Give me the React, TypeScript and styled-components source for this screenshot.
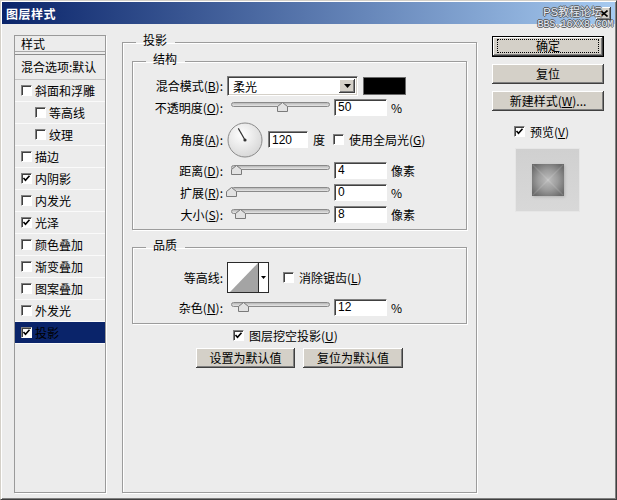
import React from "react";
import styled, { createGlobalStyle } from "styled-components";

const FONT = `"Noto Sans CJK SC", "Noto Sans", sans-serif`;

const GlobalStyle = createGlobalStyle`
  html, body { margin: 0; padding: 0; background: #ececec; }
  body { font-family: ${FONT}; font-size: 12px; color: #000; }
  * { box-sizing: border-box; }
`;

const Window = styled.div`
  position: relative;
  width: 617px;
  height: 500px;
  background: #ececec;
  border-top: 1px solid #d4d0c8;
  border-left: 1px solid #d4d0c8;
  border-right: 1px solid #404040;
  border-bottom: 1px solid #404040;
  box-shadow: inset 1px 1px 0 #fff, inset -1px -1px 0 #808080;
  padding: 1px;
  display: flex;
  flex-direction: column;
  overflow: hidden;
`;

const TitleBar = styled.div`
  height: 22px;
  flex: none;
  background: linear-gradient(to right, #0a246a, #a6caf0);
  display: flex;
  align-items: center;
  padding-left: 4px;
`;

const Title = styled.span`
  color: #fff;
  font-weight: bold;
  font-size: 12px;
  letter-spacing: 0.5px;
`;

const CloseBtn = styled.span`
  margin-left: auto;
  margin-right: 4px;
  width: 15px;
  height: 13px;
  background: #d4d0c8;
  box-shadow: inset -1px -1px 0 #404040, inset 1px 1px 0 #fff, inset -2px -2px 0 #808080;
  display: flex;
  align-items: center;
  justify-content: center;
`;

const Watermark = styled.div`
  position: absolute;
  top: 4px;
  right: 3px;
  display: flex;
  flex-direction: column;
  align-items: flex-end;
  color: #e6edf8;
  text-shadow: -1px 0 #5a5a5a, 1px 0 #5a5a5a, 0 -1px #5a5a5a, 0 1px #5a5a5a;
  pointer-events: none;
`;

const WmTop = styled.span`
  font-family: "Liberation Sans", ${FONT};
  font-size: 11px;
  line-height: 14px;
  margin-right: 11px;
`;

const WmBottom = styled.span`
  font-family: "Liberation Mono", monospace;
  font-size: 10px;
  line-height: 12px;
  letter-spacing: -0.2px;
`;

const Body = styled.div`
  flex: 1;
  display: flex;
  align-items: stretch;
  padding: 9px 0 5px 12px;
`;

/* ---------- left style list ---------- */

const StyleList = styled.div`
  width: 92px;
  margin-top: 2px;
  border: 1px solid #9a9a9a;
  box-shadow: 1px 1px 0 #fff;
  display: flex;
  flex-direction: column;
`;

const ListHeader = styled.div`
  height: 16px;
  line-height: 16px;
  padding-left: 6px;
  border-bottom: 1px solid #a8a8a8;
`;

const BlendRow = styled.div`
  margin-top: 2px;
  height: 26px;
  line-height: 24px;
  padding-left: 6px;
  border-top: 1px solid #8c8c8c;
  border-bottom: 1px solid #c4c4c4;
  white-space: nowrap;
  overflow: hidden;
`;

const ListItem = styled.div<{ $sub?: boolean; $selected?: boolean }>`
  height: 22px;
  display: flex;
  align-items: center;
  gap: 3px;
  padding-left: ${(p) => (p.$sub ? 20 : 6)}px;
  border-bottom: 1px solid #fafafa;
  background: ${(p) => (p.$selected ? "#0a246a" : "transparent")};
  color: #000;
`;

/* ---------- common controls ---------- */

const CheckBox = styled.span`
  display: inline-flex;
  align-items: center;
  justify-content: center;
  width: 11px;
  height: 11px;
  flex: none;
  background: #fff;
  border-top: 1px solid #808080;
  border-left: 1px solid #808080;
  border-right: 1px solid #fff;
  border-bottom: 1px solid #fff;
  box-shadow: inset 1px 1px 0 #404040;
`;

const Check: React.FC<{ checked?: boolean }> = ({ checked }) => (
  <CheckBox>
    {checked && (
      <svg width="9" height="9" viewBox="0 0 9 9">
        <polyline points="1.5,4 3.5,6.3 7.5,1.8" fill="none" stroke="#000" strokeWidth="1.6" />
      </svg>
    )}
  </CheckBox>
);

const NumField = styled.input<{ $w: number; $ml?: number }>`
  width: ${(p) => p.$w}px;
  height: 17px;
  margin-left: ${(p) => p.$ml ?? 0}px;
  flex: none;
  background: #fff;
  border-top: 1px solid #808080;
  border-left: 1px solid #808080;
  border-right: 1px solid #fff;
  border-bottom: 1px solid #fff;
  box-shadow: inset 1px 1px 0 #404040;
  padding: 0 0 0 3px;
  font-family: "Liberation Sans", sans-serif;
  font-size: 12px;
  color: #000;
  outline: none;
`;

const Unit = styled.span<{ $ml?: number }>`
  margin-left: ${(p) => p.$ml ?? 4}px;
  white-space: nowrap;
`;

const Button = styled.button<{ $w: number; $default?: boolean }>`
  width: ${(p) => p.$w}px;
  height: ${(p) => (p.$default ? 21 : 20)}px;
  flex: none;
  padding: 0;
  display: flex;
  align-items: stretch;
  justify-content: stretch;
  background: #d4d0c8;
  color: #000;
  font-family: ${FONT};
  font-size: 12px;
  border: ${(p) => (p.$default ? "1px solid #000" : "none")};
  box-shadow: inset -1px -1px 0 #404040, inset 1px 1px 0 #fff, inset -2px -2px 0 #808080;
  cursor: default;
`;

const BtnLabel = styled.span<{ $focus?: boolean }>`
  flex: 1;
  display: flex;
  align-items: center;
  justify-content: center;
  margin: ${(p) => (p.$focus ? "2px 4px 3px 4px" : "0")};
  border: ${(p) => (p.$focus ? "1px dotted #000" : "none")};
  line-height: 1;
`;

/* ---------- group boxes ---------- */

const GroupBox = styled.fieldset<{ $mx?: number; $mt?: number }>`
  margin: ${(p) => p.$mt ?? 0}px ${(p) => p.$mx ?? 0}px 0;
  padding: 0;
  min-width: 0;
  border: 1px solid #9c9c9c;
  box-shadow: 1px 1px 0 #fff, inset 1px 1px 0 #fff;
  display: flex;
  flex-direction: column;
`;

const Legend = styled.legend`
  margin-left: 13px;
  padding: 0 8px 4px 7px;
  line-height: 14px;
  font-size: 12px;
`;

const MainGroup = styled(GroupBox)`
  width: 355px;
  margin-left: 16px;
`;

const GroupContent = styled.div<{ $pt: number; $pb: number }>`
  display: flex;
  flex-direction: column;
  padding: ${(p) => p.$pt}px 0 ${(p) => p.$pb}px;
`;

const Row = styled.div<{ $h: number; $mt?: number }>`
  height: ${(p) => p.$h}px;
  margin-top: ${(p) => p.$mt ?? 0}px;
  display: flex;
  align-items: center;
`;

const Label = styled.span`
  width: 90px;
  flex: none;
  text-align: right;
  white-space: nowrap;
`;

const SelectBox = styled.div`
  margin-left: 4px;
  width: 131px;
  height: 20px;
  flex: none;
  display: flex;
  align-items: stretch;
  background: #fff;
  border-top: 1px solid #808080;
  border-left: 1px solid #808080;
  border-right: 1px solid #fff;
  border-bottom: 1px solid #fff;
  box-shadow: inset 1px 1px 0 #404040, inset -1px -1px 0 #d4d0c8;
  padding: 2px 2px 2px 5px;
`;

const SelectText = styled.span`
  flex: 1;
  line-height: 16px;
`;

const SelectArrow = styled.span`
  width: 16px;
  flex: none;
  background: #d4d0c8;
  box-shadow: inset -1px -1px 0 #404040, inset 1px 1px 0 #fff, inset -2px -2px 0 #808080;
  display: flex;
  align-items: center;
  justify-content: center;
`;

const Swatch = styled.div`
  margin-left: 5px;
  width: 43px;
  height: 18px;
  flex: none;
  background: #000;
  border: 1px solid #6a6a6a;
`;

const SliderBox = styled.div`
  position: relative;
  width: 108px;
  height: 10px;
  margin-left: 3px;
  flex: none;
`;

const Track = styled.div`
  margin: 0 4px 0 5px;
  height: 5px;
  border-radius: 3px;
  border: 1px solid #8a8a8a;
  background: linear-gradient(#b8b8b8, #e6e6e6);
`;

const Thumb = styled.svg`
  position: absolute;
  top: 0;
`;

const Slider: React.FC<{ pos: number }> = ({ pos }) => (
  <SliderBox>
    <Track />
    <Thumb width="11" height="10" viewBox="0 0 11 10" style={{ left: pos - 0.5 }}>
      <path d="M5.5 0.5 L10.5 4.5 L10.5 9.5 L0.5 9.5 L0.5 4.5 Z" fill="#e2e2e2" stroke="#7a7a7a" />
    </Thumb>
  </SliderBox>
);

const Dial = styled.svg`
  margin-left: 4px;
  flex: none;
`;

const ContourBox = styled.div`
  margin-left: 4px;
  width: 42px;
  height: 31px;
  flex: none;
  border: 1px solid #2a2a2a;
  background: #fff;
  display: flex;
`;

const ContourArrow = styled.span`
  width: 10px;
  border-left: 1px solid #2a2a2a;
  display: flex;
  align-items: center;
  justify-content: center;
`;

const CheckLabel = styled.label<{ $ml: number }>`
  margin-left: ${(p) => p.$ml}px;
  display: flex;
  align-items: center;
  gap: 5px;
  white-space: nowrap;
`;

const ButtonRow = styled.div`
  margin-top: 4px;
  display: flex;
  justify-content: center;
  gap: 8px;
`;

/* ---------- right column ---------- */

const SideColumn = styled.div`
  margin-left: 15px;
  margin-top: 3px;
  width: 112px;
  display: flex;
  flex-direction: column;
  align-items: flex-start;
  gap: 7px;
`;

const PreviewToggle = styled(CheckLabel)`
  margin-top: 5px;
`;

const PreviewFrame = styled.div`
  margin-left: 23px;
  margin-top: 1px;
  width: 65px;
  height: 64px;
  border: 1px solid #e6e6e6;
  background: linear-gradient(#d0d0d0, #d8d8d8);
  display: flex;
  align-items: center;
  justify-content: center;
`;

const U: React.FC<{ children: React.ReactNode }> = ({ children }) => <u>{children}</u>;

const styleItems: { label: string; sub?: boolean; checked?: boolean; selected?: boolean }[] = [
  { label: "斜面和浮雕" },
  { label: "等高线", sub: true },
  { label: "纹理", sub: true },
  { label: "描边" },
  { label: "内阴影", checked: true },
  { label: "内发光" },
  { label: "光泽", checked: true },
  { label: "颜色叠加" },
  { label: "渐变叠加" },
  { label: "图案叠加" },
  { label: "外发光" },
  { label: "投影", checked: true, selected: true },
];

const DownTri = () => (
  <svg width="7" height="4" viewBox="0 0 7 4">
    <path d="M0 0 H7 L3.5 4 Z" fill="#000" />
  </svg>
);

export default function App() {
  return (
    <>
      <GlobalStyle />
      <Window>
        <TitleBar>
          <Title>图层样式</Title>
          <CloseBtn>
            <svg width="8" height="7" viewBox="0 0 8 7">
              <path d="M0.5 0.5 L7.5 6.5 M7.5 0.5 L0.5 6.5" stroke="#000" strokeWidth="1.6" />
            </svg>
          </CloseBtn>
        </TitleBar>
        <Watermark>
          <WmTop>PS教程论坛</WmTop>
          <WmBottom>BBS.16XX8.COM</WmBottom>
        </Watermark>
        <Body>
          <StyleList>
            <ListHeader>样式</ListHeader>
            <BlendRow>混合选项:默认</BlendRow>
            {styleItems.map((it) => (
              <ListItem key={it.label} $sub={it.sub} $selected={it.selected}>
                <Check checked={it.checked} />
                <span>{it.label}</span>
              </ListItem>
            ))}
          </StyleList>

          <MainGroup>
            <Legend>投影</Legend>
            <GroupBox $mx={9} $mt={1}>
              <Legend>结构</Legend>
              <GroupContent $pt={5} $pb={5}>
                <Row $h={21}>
                  <Label>
                    混合模式(<U>B</U>):
                  </Label>
                  <SelectBox>
                    <SelectText>柔光</SelectText>
                    <SelectArrow>
                      <DownTri />
                    </SelectArrow>
                  </SelectBox>
                  <Swatch />
                </Row>
                <Row $h={20} $mt={1}>
                  <Label>
                    不透明度(<U>O</U>):
                  </Label>
                  <Slider pos={51} />
                  <NumField $w={53} readOnly value="50" />
                  <Unit>%</Unit>
                </Row>
                <Row $h={37} $mt={4}>
                  <Label>
                    角度(<U>A</U>):
                  </Label>
                  <Dial width="36" height="36" viewBox="0 0 36 36">
                    <defs>
                      <radialGradient id="dialg" cx="40%" cy="35%" r="70%">
                        <stop offset="0" stopColor="#ffffff" />
                        <stop offset="1" stopColor="#d6d6d6" />
                      </radialGradient>
                    </defs>
                    <circle cx="18" cy="18" r="17" fill="url(#dialg)" stroke="#8a8a8a" />
                    <line x1="18" y1="18" x2="11.3" y2="6.4" stroke="#333" strokeWidth="1.2" />
                    <circle cx="18" cy="18" r="1.6" fill="#333" />
                  </Dial>
                  <NumField $w={40} $ml={5} readOnly value="120" />
                  <Unit $ml={5}>度</Unit>
                  <CheckLabel $ml={8}>
                    <Check />
                    <span>
                      使用全局光(<U>G</U>)
                    </span>
                  </CheckLabel>
                </Row>
                <Row $h={20} $mt={2}>
                  <Label>
                    距离(<U>D</U>):
                  </Label>
                  <Slider pos={5.5} />
                  <NumField $w={53} readOnly value="4" />
                  <Unit>像素</Unit>
                </Row>
                <Row $h={20} $mt={2}>
                  <Label>
                    扩展(<U>R</U>):
                  </Label>
                  <Slider pos={0.5} />
                  <NumField $w={53} readOnly value="0" />
                  <Unit>%</Unit>
                </Row>
                <Row $h={20} $mt={2}>
                  <Label>
                    大小(<U>S</U>):
                  </Label>
                  <Slider pos={9} />
                  <NumField $w={53} readOnly value="8" />
                  <Unit>像素</Unit>
                </Row>
              </GroupContent>
            </GroupBox>

            <GroupBox $mx={9} $mt={8}>
              <Legend>品质</Legend>
              <GroupContent $pt={6} $pb={6}>
                <Row $h={31}>
                  <Label>等高线:</Label>
                  <ContourBox>
                    <svg width="30" height="29" viewBox="0 0 30 29">
                      <polygon points="2,29 30,0 30,29" fill="#a4a4a4" />
                    </svg>
                    <ContourArrow>
                      <svg width="5" height="3" viewBox="0 0 5 3">
                        <path d="M0 0 H5 L2.5 3 Z" fill="#000" />
                      </svg>
                    </ContourArrow>
                  </ContourBox>
                  <CheckLabel $ml={14}>
                    <Check />
                    <span>
                      消除锯齿(<U>L</U>)
                    </span>
                  </CheckLabel>
                </Row>
                <Row $h={20} $mt={4}>
                  <Label>
                    杂色(<U>N</U>):
                  </Label>
                  <Slider pos={12} />
                  <NumField $w={53} readOnly value="12" />
                  <Unit>%</Unit>
                </Row>
              </GroupContent>
            </GroupBox>

            <Row $h={17} $mt={3}>
              <CheckLabel $ml={110}>
                <Check checked />
                <span>
                  图层挖空投影(<U>U</U>)
                </span>
              </CheckLabel>
            </Row>
            <ButtonRow>
              <Button $w={99}>
                <BtnLabel>设置为默认值</BtnLabel>
              </Button>
              <Button $w={100}>
                <BtnLabel>复位为默认值</BtnLabel>
              </Button>
            </ButtonRow>
          </MainGroup>

          <SideColumn>
            <Button $w={112} $default>
              <BtnLabel $focus>确定</BtnLabel>
            </Button>
            <Button $w={112}>
              <BtnLabel>复位</BtnLabel>
            </Button>
            <Button $w={112}>
              <BtnLabel>
                新建样式(<U>W</U>)...
              </BtnLabel>
            </Button>
            <PreviewToggle $ml={22}>
              <Check checked />
              <span>
                预览(<U>V</U>)
              </span>
            </PreviewToggle>
            <PreviewFrame>
              <svg width="40" height="40" viewBox="0 0 40 40">
                <defs>
                  <radialGradient id="pvg" cx="50%" cy="50%" r="62%">
                    <stop offset="0" stopColor="#bdbdbd" />
                    <stop offset="0.5" stopColor="#9c9c9c" />
                    <stop offset="1" stopColor="#6a6a6a" />
                  </radialGradient>
                  <filter id="pvs" x="-30%" y="-30%" width="160%" height="160%">
                    <feGaussianBlur stdDeviation="1.5" />
                  </filter>
                </defs>
                <rect x="5" y="5" width="32" height="32" fill="#8a8a8a" opacity="0.45" filter="url(#pvs)" />
                <rect x="4" y="4" width="32" height="32" fill="url(#pvg)" />
                <line x1="5" y1="5" x2="35" y2="35" stroke="#ffffff" strokeOpacity="0.12" strokeWidth="1.5" />
                <line x1="35" y1="5" x2="5" y2="35" stroke="#ffffff" strokeOpacity="0.12" strokeWidth="1.5" />
              </svg>
            </PreviewFrame>
          </SideColumn>
        </Body>
      </Window>
    </>
  );
}
